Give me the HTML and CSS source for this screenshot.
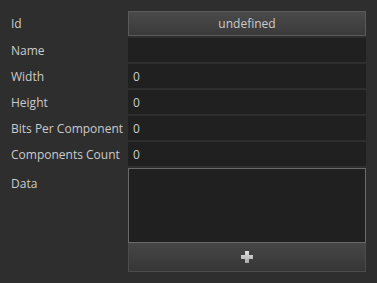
FILE: index.html
```html
<!DOCTYPE html>
<html lang="en">
<head>
    <meta charset="UTF-8">
    <title>Image Properties</title>
    <link rel="stylesheet" href="styles.css">
</head>
<body>
    <!-- property grid -->
    <div class="props">
        <div class="prop-label">Id</div>
        <button class="prop-button">undefined</button>

        <div class="prop-label">Name</div>
        <div class="prop-input"></div>

        <div class="prop-label">Width</div>
        <div class="prop-input">0</div>

        <div class="prop-label">Height</div>
        <div class="prop-input">0</div>

        <div class="prop-label">Bits Per Component</div>
        <div class="prop-input">0</div>

        <div class="prop-label">Components Count</div>
        <div class="prop-input">0</div>

        <div class="prop-label prop-label-top">Data</div>
        <div class="data-field">
            <div class="data-area"></div>
            <button class="add-button" title="Add">
                <svg width="12" height="12" viewBox="0 0 12 12">
                    <defs>
                        <linearGradient id="plusFill" x1="0" y1="0" x2="0" y2="1">
                            <stop offset="0" stop-color="#e0e0e0"/>
                            <stop offset="1" stop-color="#a8a8a8"/>
                        </linearGradient>
                    </defs>
                    <path d="M4 0H8V4H12V8H8V12H4V8H0V4H4Z" fill="url(#plusFill)"/>
                </svg>
            </button>
        </div>
    </div>
</body>
</html>
```

FILE: styles.css
```css
* {
    margin: 0;
    padding: 0;
    box-sizing: border-box;
    font-family: 'Open Sans', 'Noto Sans', sans-serif;
}

body {
    background-color: #2e2e2e;
    color: #cbcbcb;
    font-size: 12px;
}

/* 属性表格 */
.props {
    display: grid;
    grid-template-columns: 117px 238px;
    row-gap: 2px;
    padding: 11px 11px 0 11px;
}

.prop-label {
    height: 24px;
    display: flex;
    align-items: center;
    white-space: nowrap;
}

.prop-label-top {
    height: 30px;
}

.prop-button {
    height: 25px;
    border: 1px solid #5a5a5a;
    background: linear-gradient(#4a4a4a, #3a3a3a);
    color: #cbcbcb;
    font-size: 12px;
    cursor: pointer;
}

.prop-input {
    height: 24px;
    background-color: #202020;
    padding: 0 5px;
    display: flex;
    align-items: center;
}

.data-field {
    display: flex;
    flex-direction: column;
}

.data-area {
    height: 75px;
    background-color: #202020;
    border: 1px solid #6a6a6a;
}

.add-button {
    height: 29px;
    border: 1px solid #4c4c4c;
    border-top: none;
    background: linear-gradient(#464646, #363636);
    display: flex;
    align-items: center;
    justify-content: center;
    cursor: pointer;
}
```
